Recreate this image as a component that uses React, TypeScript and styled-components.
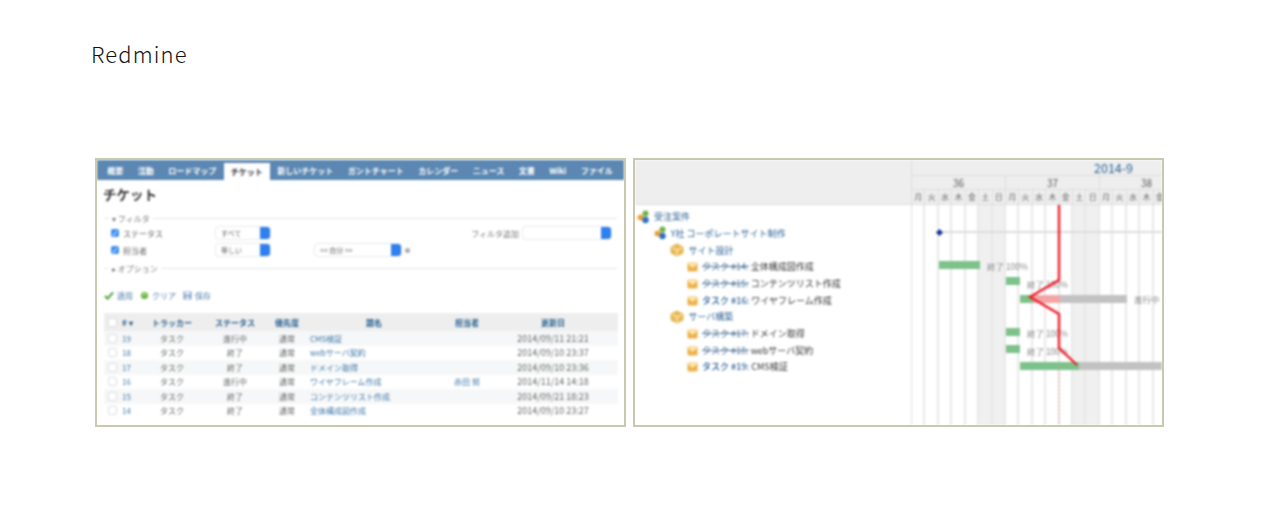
import React from "react";
import styled, { createGlobalStyle } from "styled-components";

const FONT = `"Noto Sans CJK JP", "Liberation Sans", sans-serif`;
const DAY = 13.43;

const Global = createGlobalStyle`
  html, body { margin: 0; padding: 0; background: #fff; }
  body { font-family: ${FONT}; }
`;
const Page = styled.div`
  width: 1280px;
  height: 521px;
  overflow: hidden;
  background: #fff;
`;
const Title = styled.h1`
  margin: 0;
  padding: 37px 0 0 91px;
  height: 158px;
  box-sizing: border-box;
  font-size: 22px;
  line-height: 32px;
  font-weight: 300;
  letter-spacing: 1.15px;
  color: #111;
`;
const Shots = styled.div`
  display: flex;
  gap: 7px;
  padding-left: 95px;
`;
const Shot = styled.section`
  width: 531px;
  height: 269px;
  box-sizing: border-box;
  border: 2px solid #c9c9b3;
  background: #fff;
  overflow: hidden;
  flex: none;
`;
const IssueInner = styled.div`
  height: 100%;
  display: flex;
  flex-direction: column;
  filter: blur(0.8px);
`;
const GanttInner = styled.div`
  height: 100%;
  display: flex;
  filter: blur(0.8px);
`;

/* ---------- tabs ---------- */
const Tabs = styled.nav`
  display: flex;
  height: 20px;
  padding-left: 3px;
  background: #5b87b2;
  flex: none;
`;
const Tab = styled.span<{ $active?: boolean }>`
  padding: 0 7.25px;
  font-size: 8px;
  font-weight: 700;
  white-space: nowrap;
  color: ${(p) => (p.$active ? "#333" : "#fff")};
  background: ${(p) => (p.$active ? "#fff" : "transparent")};
  margin-top: ${(p) => (p.$active ? "3px" : "0")};
  line-height: ${(p) => (p.$active ? "18px" : "22px")};
`;

/* ---------- issues ---------- */
const Body = styled.div`
  padding: 0 7px;
`;
const H2 = styled.h2`
  margin: 0 0 0 -1px;
  height: 28px;
  font-size: 13.5px;
  line-height: 28px;
  font-weight: 700;
  color: #333;
`;
const Legend = styled.div<{ $top: number }>`
  display: flex;
  align-items: center;
  gap: 3px;
  margin-top: ${(p) => p.$top}px;
  height: 12px;
  font-size: 8px;
  color: #777;
  &::before { content: ""; width: 5px; border-top: 1px solid #e6e6e6; }
  &::after { content: ""; flex: 1; border-top: 1px solid #e6e6e6; }
`;
const FilterRow = styled.div<{ $top: number }>`
  display: flex;
  align-items: center;
  height: 14px;
  margin-top: ${(p) => p.$top}px;
  padding-left: 7px;
  font-size: 8px;
  color: #666;
`;
const Check = styled.span`
  width: 8px;
  height: 8px;
  border-radius: 2px;
  background: #3d8df2;
  flex: none;
  margin-right: 4px;
  color: #fff;
  font-size: 7px;
  line-height: 8px;
  text-align: center;
`;
const FilterName = styled.span`
  width: 93px;
  flex: none;
  white-space: nowrap;
`;
const Select = styled.span<{ $w: number; $ml?: number; $mr?: number }>`
  display: flex;
  justify-content: space-between;
  width: ${(p) => p.$w}px;
  height: 12px;
  margin-left: ${(p) => p.$ml ?? 0}px;
  margin-right: ${(p) => p.$mr ?? 0}px;
  box-sizing: border-box;
  padding-left: 5px;
  border-radius: 3px;
  background: #fff;
  box-shadow: 0 0 2px #bbb;
  font-size: 7px;
  line-height: 12px;
  color: #666;
  flex: none;
  &::after {
    content: "";
    width: 10px;
    margin-left: auto;
    border-radius: 0 3px 3px 0;
    background: #2f80ee;
  }
`;
const Dot = styled.span`
  width: 5px;
  height: 5px;
  margin-left: 4px;
  border-radius: 50%;
  background: #aaa;
`;
const AddLabel = styled.span`
  margin-left: auto;
  margin-right: 4px;
  color: #777;
  white-space: nowrap;
`;
const Actions = styled.div`
  display: flex;
  align-items: center;
  height: 14px;
  margin-top: 14px;
  font-size: 8px;
  color: #4d7ea8;
`;
const Action = styled.span`
  display: flex;
  align-items: center;
  gap: 3px;
  margin-right: 7px;
  white-space: nowrap;
`;
const Table = styled.table`
  width: 514px;
  margin: 11px 0 0;
  border-collapse: collapse;
  table-layout: fixed;
  font-size: 8px;
  color: #666;
`;
const Th = styled.th<{ $left?: boolean; $inset?: boolean }>`
  height: 18px;
  padding: 0 ${(p) => (p.$inset ? "8px" : "0")} 0 ${(p) => (p.$left ? "2px" : "0")};
  background: #eeeeee;
  font-size: 8px;
  font-weight: 700;
  color: #27608f;
  white-space: nowrap;
  text-align: ${(p) => (p.$left ? "left" : "center")};
`;
const Tr = styled.tr<{ $odd: boolean }>`
  background: ${(p) => (p.$odd ? "#f6f7f8" : "#fff")};
`;
const Td = styled.td<{ $link?: boolean; $left?: boolean; $date?: boolean; $num?: boolean }>`
  height: 14.5px;
  padding: 0 ${(p) => (p.$date ? "8px" : "0")} 0 ${(p) => (p.$num ? "2px" : "0")};
  font-size: ${(p) => (p.$date ? "9px" : "8px")};
  text-align: ${(p) => (p.$left ? "left" : "center")};
  color: ${(p) => (p.$link ? "#3f78a8" : "#666")};
  white-space: nowrap;
  overflow: hidden;
`;
const RowBox = styled.span`
  display: block;
  width: 7px;
  height: 7px;
  margin: 0 auto;
  border: 1px solid #ddd;
  border-radius: 2px;
  background: #fff;
`;

/* ---------- gantt ---------- */
const TreePane = styled.div`
  width: 277px;
  flex: none;
  display: flex;
  flex-direction: column;
  border-right: 1px solid #ddd;
  box-sizing: border-box;
`;
const TreeHead = styled.div`
  height: 45px;
  flex: none;
  background: #eeeeee;
  border-bottom: 1px solid #ddd;
  box-sizing: border-box;
`;
const TreeBody = styled.div`
  padding-top: 3.4px;
`;
const TreeRow = styled.div<{ $level: number }>`
  display: flex;
  align-items: center;
  height: 16.7px;
  padding-left: ${(p) => 2 + p.$level * 16.7}px;
  gap: 4px;
  font-size: 9px;
  color: #333;
  white-space: nowrap;
`;
const TreeLink = styled.span<{ $closed?: boolean; $bold?: boolean }>`
  color: ${(p) => (p.$closed ? "#4f7499" : "#2a5f92")};
  font-weight: ${(p) => (p.$bold ? 500 : 400)};
  text-decoration: ${(p) => (p.$closed ? "line-through" : "none")};
`;
const ChartPane = styled.div`
  flex: 1;
  min-width: 0;
  display: flex;
  flex-direction: column;
`;
const YearRow = styled.div`
  height: 16px;
  flex: none;
  background: #eeeeee;
  border-bottom: 1px solid #ddd;
  box-sizing: border-box;
  padding-left: 182px;
  font-size: 12.5px;
  line-height: 16px;
  color: #2a6496;
`;
const WeekRow = styled.div`
  display: flex;
  height: 14px;
  flex: none;
  background: #eeeeee;
  border-bottom: 1px solid #ddd;
  box-sizing: border-box;
`;
const Week = styled.span`
  width: ${DAY * 7}px;
  flex: none;
  box-sizing: border-box;
  border-right: 1px solid #ddd;
  text-align: center;
  font-size: 10px;
  line-height: 14px;
  color: #555;
`;
const DayRow = styled.div`
  display: flex;
  height: 15px;
  flex: none;
  background: #eeeeee;
  border-bottom: 1px solid #ddd;
  box-sizing: border-box;
`;
const DayCell = styled.span`
  width: ${DAY}px;
  flex: none;
  box-sizing: border-box;
  border-right: 1px solid #ddd;
  text-align: center;
  font-size: 8px;
  line-height: 14px;
  color: #666;
`;
const Canvas = styled.div`
  position: relative;
  flex: 1;
  display: flex;
  overflow: hidden;
`;
const DayColumn = styled.span<{ $weekend: boolean }>`
  width: ${DAY}px;
  flex: none;
  box-sizing: border-box;
  border-right: 2px solid #e8e8e8;
  background: ${(p) => (p.$weekend ? "#f0f0f0" : "#fff")};
`;
const Bar = styled.span<{ $color: string }>`
  position: absolute;
  height: 8px;
  background: ${(p) => p.$color};
`;
const BarLabel = styled.span`
  position: absolute;
  font-size: 8.5px;
  line-height: 12px;
  color: #888;
  white-space: nowrap;
`;
const ProjectLine = styled.span`
  position: absolute;
  left: 28px;
  right: 0;
  top: 26px;
  height: 2px;
  background: #ddd;
`;
const Diamond = styled.span`
  position: absolute;
  left: 25px;
  top: 24.5px;
  width: 5px;
  height: 5px;
  background: #12309a;
  transform: rotate(45deg);
`;
const Overlay = styled.svg`
  position: absolute;
  left: 0;
  top: 0;
`;

/* ---------- icons ---------- */
const ProjectIcon = () => (
  <svg width="13" height="14" viewBox="0 0 13 14" style={{ flex: "none" }}>
    <circle cx="8.5" cy="3.5" r="3" fill="#6db04a" />
    <circle cx="3.5" cy="7.5" r="3" fill="#f0a030" />
    <circle cx="8.5" cy="10" r="3.2" fill="#2f6fc0" />
  </svg>
);
const PackageIcon = () => (
  <svg width="14" height="14" viewBox="0 0 14 14" style={{ flex: "none" }}>
    <path d="M7 1 13 4v6l-6 3-6-3V4z" fill="#e9bb57" stroke="#d8a63a" strokeWidth=".8" />
    <path d="M1.5 4.2 7 7l5.5-2.8M7 7v5.6" stroke="#fff3c8" strokeWidth="1" fill="none" />
  </svg>
);
const TaskIcon = () => (
  <svg width="11" height="11" viewBox="0 0 11 11" style={{ flex: "none" }}>
    <rect x=".5" y="1.5" width="10" height="9" rx="1" fill="#eeb04a" />
    <path d="M.5 2 5.5 6.5 10.5 2" fill="#fbe6a8" stroke="#fff2c8" strokeWidth=".8" />
  </svg>
);
const CheckIcon = () => (
  <svg width="10" height="9" viewBox="0 0 10 9">
    <path d="M1 5 3.6 7.6 9 1.4" stroke="#45a035" strokeWidth="2" fill="none" />
  </svg>
);
const ClearIcon = () => (
  <svg width="9" height="9" viewBox="0 0 9 9">
    <circle cx="4.5" cy="4.5" r="3.6" fill="#6bb43f" />
    <path d="M2.6 4.5a2 2 0 0 1 3.8-.6" stroke="#e8f6d8" strokeWidth="1" fill="none" />
  </svg>
);
const SaveIcon = () => (
  <svg width="9" height="9" viewBox="0 0 9 9">
    <rect x=".5" y=".5" width="8" height="8" fill="#7d9fc8" />
    <rect x="2" y=".8" width="5" height="3" fill="#e6eef8" />
    <rect x="2.5" y="5.4" width="4" height="3" fill="#dfe8f3" />
  </svg>
);

/* ---------- data ---------- */
const tabs = ["概要", "活動", "ロードマップ", "チケット", "新しいチケット", "ガントチャート", "カレンダー", "ニュース", "文書", "Wiki", "ファイル"];
const issues = [
  ["19", "進行中", "CMS検証", "", "2014/09/11 21:21"],
  ["18", "終了", "webサーバ契約", "", "2014/09/10 23:37"],
  ["17", "終了", "ドメイン取得", "", "2014/09/10 23:36"],
  ["16", "進行中", "ワイヤフレーム作成", "赤田 努", "2014/11/14 14:18"],
  ["15", "終了", "コンテンツリスト作成", "", "2014/09/21 18:23"],
  ["14", "終了", "全体構成図作成", "", "2014/09/10 23:27"],
];
const colWidths = [16, 18, 68, 58, 46, 128, 58, 122];
const days = ["月", "火", "水", "木", "金", "土", "日"];
const allDays = Array.from({ length: 19 }, (_, i) => days[i % 7]);

type Node = { level: number; kind: "project" | "package" | "task"; link?: string; rest?: string; closed?: boolean };
const tree: Node[] = [
  { level: 0, kind: "project", link: "受注案件" },
  { level: 1, kind: "project", link: "Y社 コーポレートサイト制作" },
  { level: 2, kind: "package", link: "サイト設計" },
  { level: 3, kind: "task", link: "タスク #14:", rest: " 全体構成図作成", closed: true },
  { level: 3, kind: "task", link: "タスク #15:", rest: " コンテンツリスト作成", closed: true },
  { level: 3, kind: "task", link: "タスク #16:", rest: " ワイヤフレーム作成" },
  { level: 2, kind: "package", link: "サーバ構築" },
  { level: 3, kind: "task", link: "タスク #17:", rest: " ドメイン取得", closed: true },
  { level: 3, kind: "task", link: "タスク #18:", rest: " webサーバ契約", closed: true },
  { level: 3, kind: "task", link: "タスク #19:", rest: " CMS検証" },
];
const GREEN = "#7cc28a";
const PINK = "#f3a5a5";
const GREY = "#c2c2c2";
const bars = [
  { x: 27, w: 41, y: 56, c: GREEN },
  { x: 94, w: 14, y: 72, c: GREEN },
  { x: 108, w: 13, y: 90, c: GREEN },
  { x: 121, w: 27, y: 90, c: PINK },
  { x: 148, w: 67, y: 90, c: GREY },
  { x: 94, w: 14, y: 123, c: GREEN },
  { x: 94, w: 14, y: 140, c: GREEN },
  { x: 108, w: 59, y: 157, c: GREEN },
  { x: 167, w: 84, y: 157, c: GREY },
];
const labels = [
  { x: 75, y: 55, t: "終了 100%" },
  { x: 115, y: 73, t: "終了 100%" },
  { x: 222, y: 88, t: "進行中" },
  { x: 115, y: 122, t: "終了 100%" },
  { x: 115, y: 140, t: "終了 100%" },
];

export default function App() {
  return (
    <Page>
      <Global />
      <Title>Redmine</Title>
      <Shots>
        <Shot>
          <IssueInner>
            <Tabs>
              {tabs.map((t) => (
                <Tab key={t} $active={t === "チケット"}>{t}</Tab>
              ))}
            </Tabs>
            <Body>
              <H2>チケット</H2>
              <Legend $top={4}>▾ フィルタ</Legend>
              <FilterRow $top={2}>
                <Check>✓</Check>
                <FilterName>ステータス</FilterName>
                <Select $w={54}>すべて</Select>
                <AddLabel>フィルタ追加</AddLabel>
                <Select $w={88} $mr={6} />
              </FilterRow>
              <FilterRow $top={3}>
                <Check>✓</Check>
                <FilterName>担当者</FilterName>
                <Select $w={54}>等しい</Select>
                <Select $w={86} $ml={45}>&lt;&lt; 自分 &gt;&gt;</Select>
                <Dot />
              </FilterRow>
              <Legend $top={5}>▸ オプション</Legend>
              <Actions>
                <Action><CheckIcon />適用</Action>
                <Action><ClearIcon />クリア</Action>
                <Action><SaveIcon />保存</Action>
              </Actions>
              <Table>
                <colgroup>
                  {colWidths.map((w, i) => <col key={i} width={w} />)}
                </colgroup>
                <thead>
                  <tr>
                    <Th><RowBox /></Th>
                    <Th $left># ▾</Th>
                    <Th>トラッカー</Th>
                    <Th>ステータス</Th>
                    <Th>優先度</Th>
                    <Th>題名</Th>
                    <Th>担当者</Th>
                    <Th $inset>更新日</Th>
                  </tr>
                </thead>
                <tbody>
                  {issues.map((r, i) => (
                    <Tr key={r[0]} $odd={i % 2 === 0}>
                      <Td><RowBox /></Td>
                      <Td $link $left $num>{r[0]}</Td>
                      <Td>タスク</Td>
                      <Td>{r[1]}</Td>
                      <Td>通常</Td>
                      <Td $link $left>{r[2]}</Td>
                      <Td $link>{r[3]}</Td>
                      <Td $date>{r[4]}</Td>
                    </Tr>
                  ))}
                </tbody>
              </Table>
            </Body>
          </IssueInner>
        </Shot>
        <Shot>
          <GanttInner>
            <TreePane>
              <TreeHead />
              <TreeBody>
                {tree.map((n, i) => (
                  <TreeRow key={i} $level={n.level}>
                    {n.kind === "project" && <ProjectIcon />}
                    {n.kind === "package" && <PackageIcon />}
                    {n.kind === "task" && <TaskIcon />}
                    <span>
                      <TreeLink $closed={n.closed} $bold={n.kind === "task" && !n.closed}>{n.link}</TreeLink>
                      {n.rest}
                    </span>
                  </TreeRow>
                ))}
              </TreeBody>
            </TreePane>
            <ChartPane>
              <YearRow>2014-9</YearRow>
              <WeekRow>
                <Week>36</Week>
                <Week>37</Week>
                <Week>38</Week>
              </WeekRow>
              <DayRow>
                {allDays.map((d, i) => <DayCell key={i}>{d}</DayCell>)}
              </DayRow>
              <Canvas>
                {allDays.map((d, i) => (
                  <DayColumn key={i} $weekend={d === "土" || d === "日"} />
                ))}
                <ProjectLine />
                <Diamond />
                {bars.map((b, i) => (
                  <Bar key={i} $color={b.c} style={{ left: b.x, top: b.y, width: b.w }} />
                ))}
                {labels.map((l, i) => (
                  <BarLabel key={i} style={{ left: l.x, top: l.y }}>{l.t}</BarLabel>
                ))}
                <Overlay width="251" height="220" viewBox="0 0 251 220">
                  <path d="M147 0V75L118 92 147 109V143L165 160" stroke="#f01c28" strokeWidth="2.4" fill="none" />
                  <path d="M147 160V220" stroke="#f28b90" strokeWidth="1" strokeDasharray="2 2" fill="none" />
                </Overlay>
              </Canvas>
            </ChartPane>
          </GanttInner>
        </Shot>
      </Shots>
    </Page>
  );
}
